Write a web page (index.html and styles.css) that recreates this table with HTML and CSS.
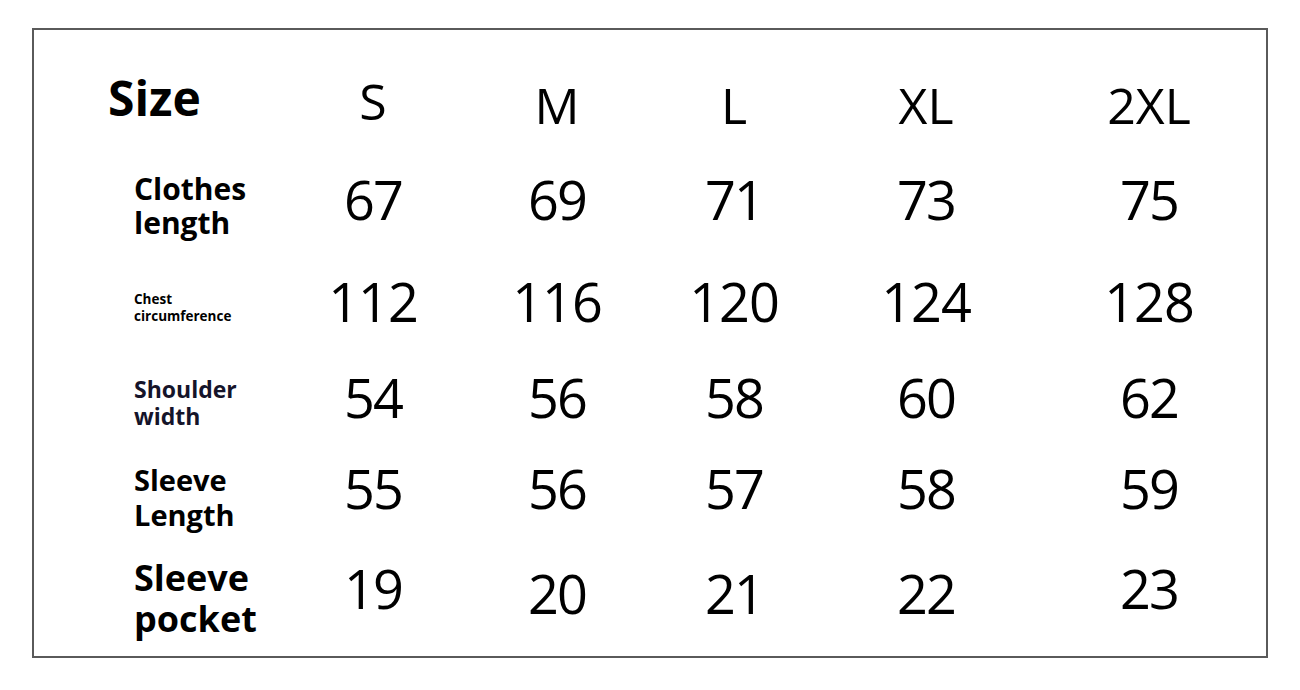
FILE: index.html
```html
<!DOCTYPE html>
<html lang="en">
<head>
<meta charset="utf-8">
<title>Size chart</title>
<link rel="stylesheet" href="styles.css">
</head>
<body>
<div class="chart">
  <div class="grid">
    <div class="cell label size">Size</div>
    <div class="cell hd">S</div>
    <div class="cell hd hd-low">M</div>
    <div class="cell hd hd-low">L</div>
    <div class="cell hd hd-low">XL</div>
    <div class="cell hd hd-low">2XL</div>

    <div class="cell label l-clothes">Clothes<br>length</div>
    <div class="cell num">67</div>
    <div class="cell num">69</div>
    <div class="cell num">71</div>
    <div class="cell num">73</div>
    <div class="cell num">75</div>

    <div class="cell label l-chest">Chest<br>circumference</div>
    <div class="cell num wide">112</div>
    <div class="cell num wide">116</div>
    <div class="cell num wide">120</div>
    <div class="cell num wide">124</div>
    <div class="cell num wide">128</div>

    <div class="cell label l-shoulder">Shoulder<br>width</div>
    <div class="cell num">54</div>
    <div class="cell num">56</div>
    <div class="cell num">58</div>
    <div class="cell num">60</div>
    <div class="cell num">62</div>

    <div class="cell label l-sleeve">Sleeve<br>Length</div>
    <div class="cell num">55</div>
    <div class="cell num">56</div>
    <div class="cell num">57</div>
    <div class="cell num">58</div>
    <div class="cell num">59</div>

    <div class="cell label l-pocket">Sleeve<br>pocket</div>
    <div class="cell num">19</div>
    <div class="cell num low">20</div>
    <div class="cell num low">21</div>
    <div class="cell num low">22</div>
    <div class="cell num">23</div>
  </div>
</div>
</body>
</html>
```
FILE: styles.css
```css
html, body {
  margin: 0;
  padding: 0;
  background: #ffffff;
}

body {
  padding: 28px 0 0 32px;
  font-family: "Open Sans", "Noto Sans", "Liberation Sans", sans-serif;
  color: #000;
}

.chart {
  box-sizing: border-box;
  width: 1236px;
  height: 630px;
  border: 2px solid #5a5a5a;
  padding-top: 26px;
}

.grid {
  display: grid;
  grid-template-columns: 246px 186px 182px 172px 212px 1fr;
  grid-template-rows: 96px 99px 104px 89px 93px 106px;
}

.cell {
  display: flex;
  align-items: center;
  justify-content: center;
  line-height: 1;
}

.hd {
  font-size: 50px;
  padding-bottom: 6px;
}

.hd-low {
  padding-bottom: 0;
  padding-top: 2px;
}

.num {
  font-size: 54px;
  letter-spacing: -2px;
  padding-bottom: 5px;
}

.num.wide {
  letter-spacing: -1px;
}

.num.low {
  padding-top: 10px;
}

.label {
  justify-content: flex-start;
  padding-left: 100px;
  font-weight: 700;
}

.size {
  padding-left: 74px;
  font-size: 48px;
  padding-bottom: 12px;
}

.l-clothes {
  font-size: 30px;
  line-height: 34px;
  padding-top: 8px;
}

.l-chest {
  font-size: 13.5px;
  line-height: 17px;
  padding-top: 10px;
}

.l-shoulder {
  font-size: 23px;
  line-height: 27px;
  color: #15142a;
  padding-top: 6px;
}

.l-sleeve {
  font-size: 29px;
  line-height: 35px;
  padding-top: 12px;
}

.l-pocket {
  font-size: 36px;
  line-height: 41px;
  padding-top: 16px;
}
```
